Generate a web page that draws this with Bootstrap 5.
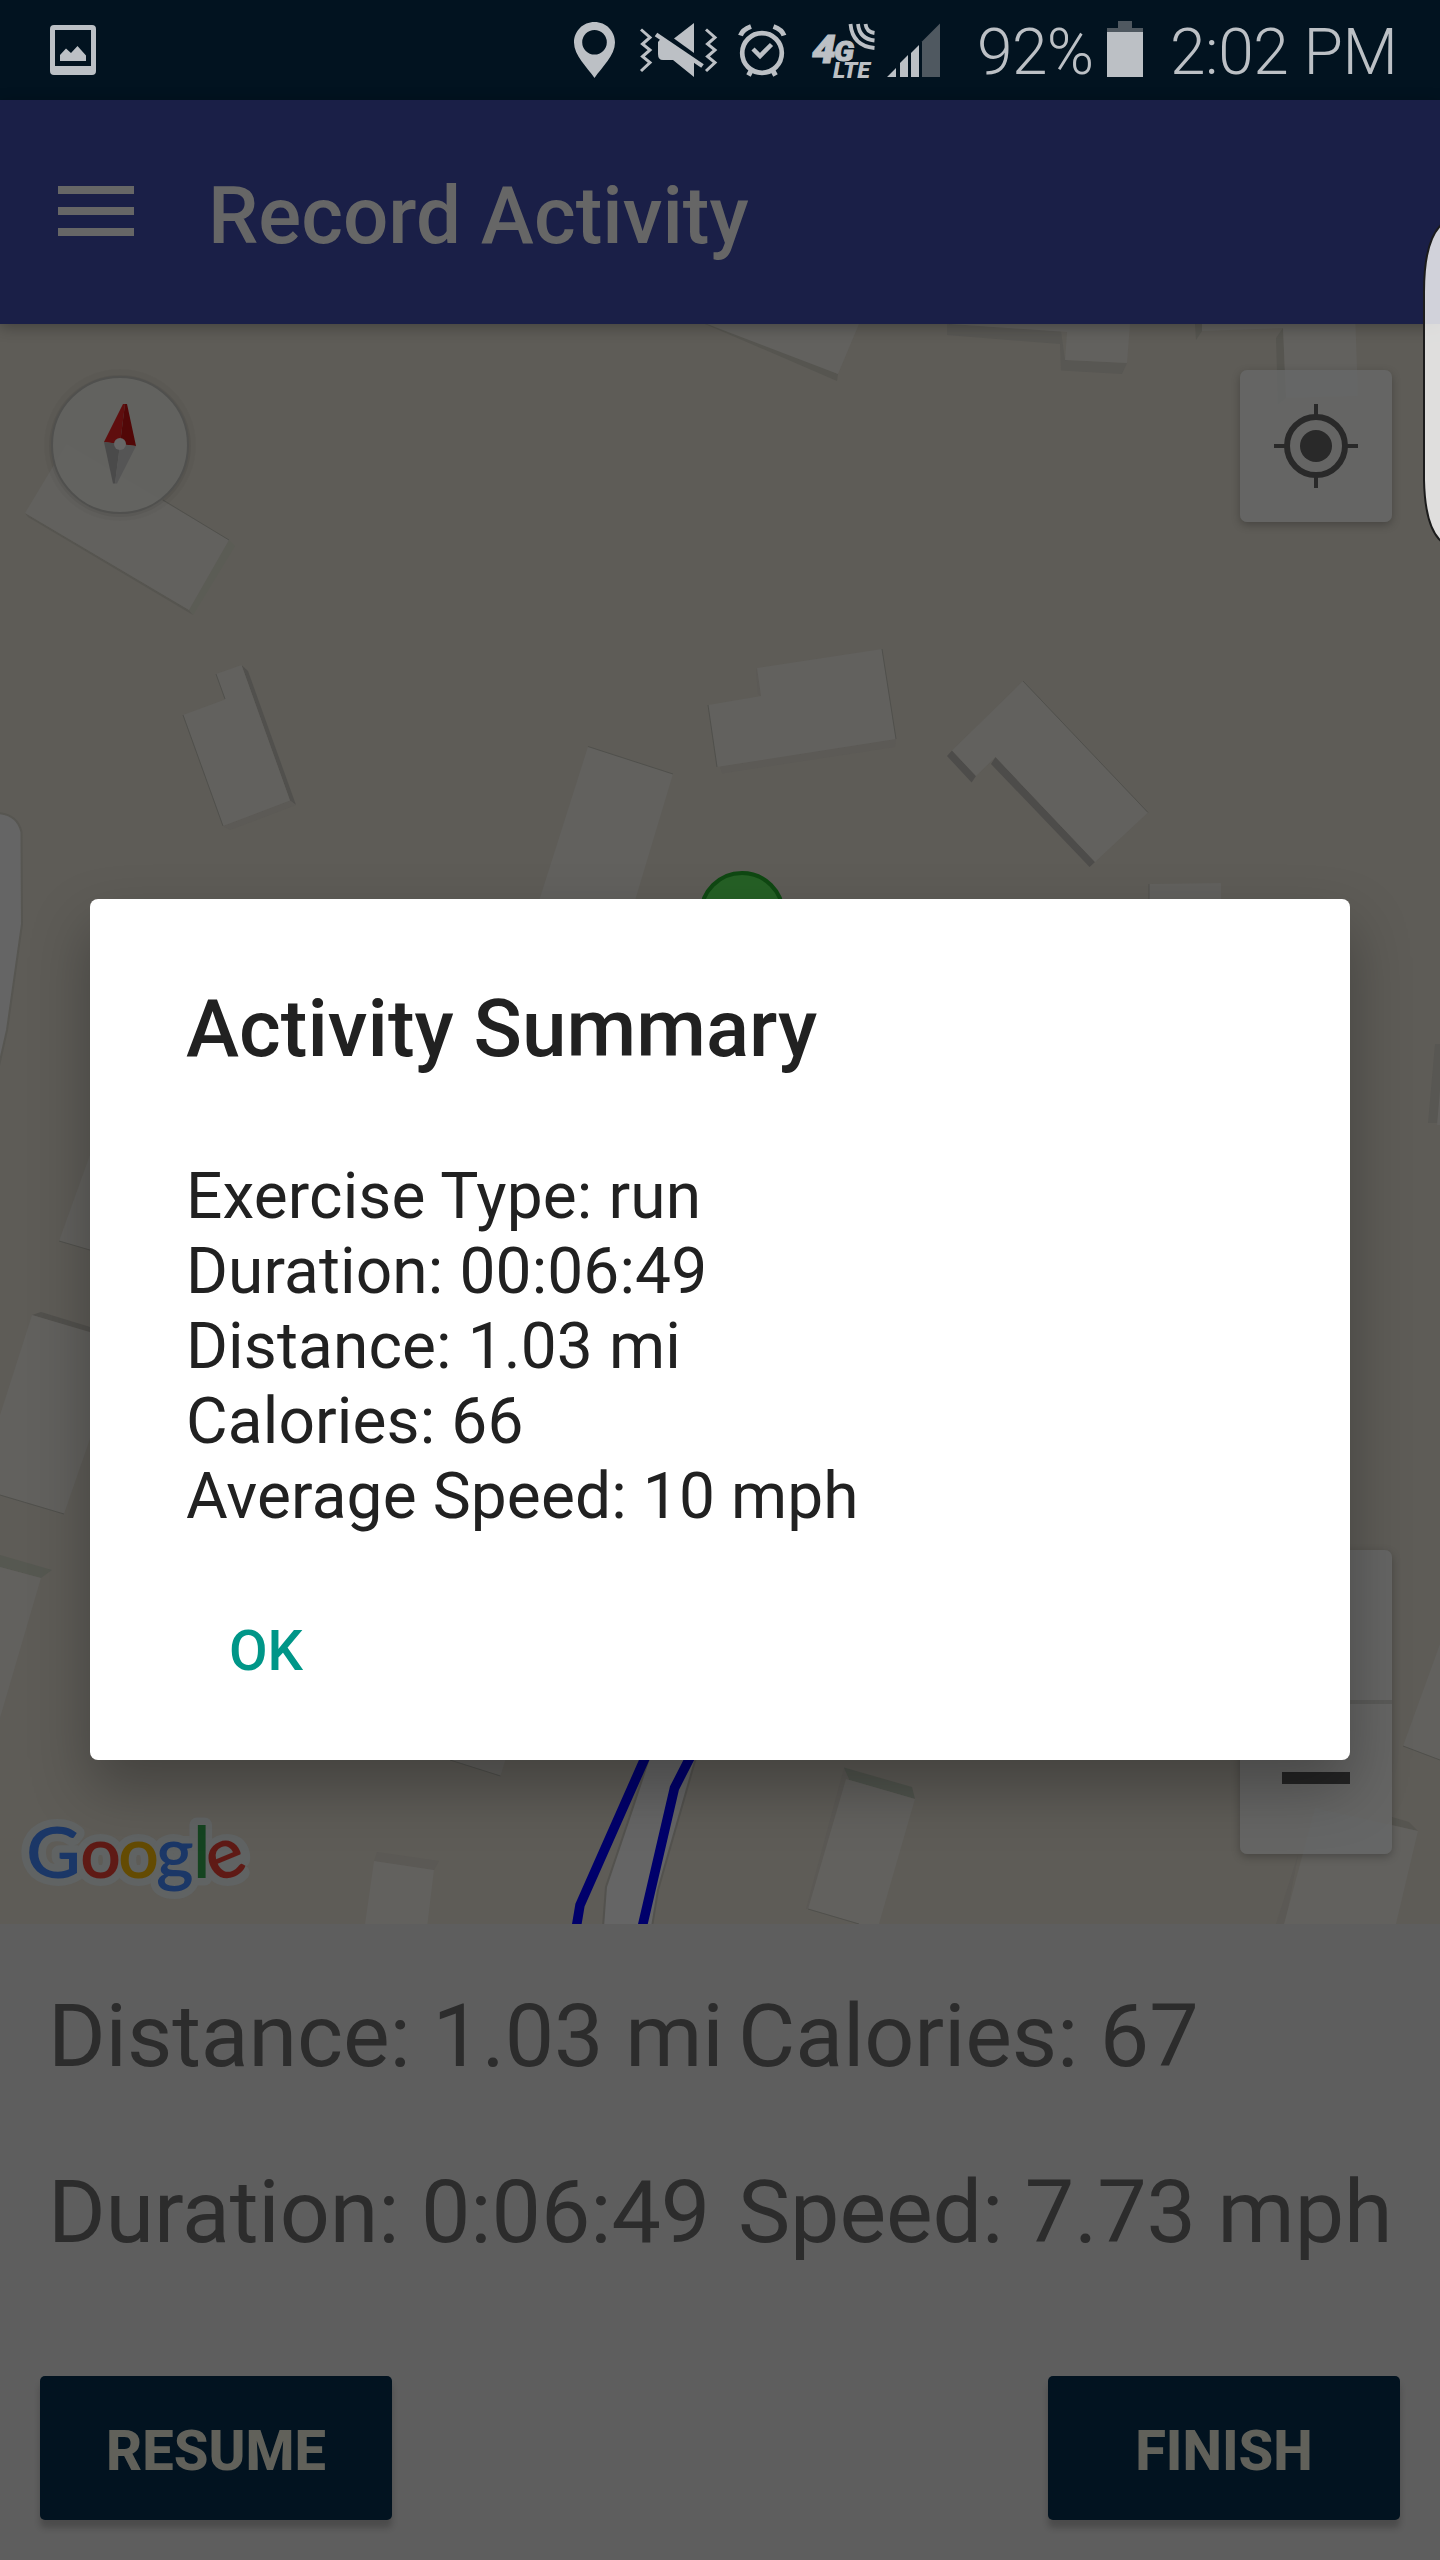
<!DOCTYPE html>
<html lang="en">
<head>
<meta charset="utf-8">
<meta name="viewport" content="width=device-width, initial-scale=1">
<title>Record Activity</title>
<link href="https://cdn.jsdelivr.net/npm/bootstrap@5.3.0/dist/css/bootstrap.min.css" rel="stylesheet">
<style>
  body { font-family: Roboto, "Liberation Sans", sans-serif; background: #5e5e5e; width: 1440px; height: 2560px; overflow: hidden; }
  svg { display: block; flex: none; }
  .status { height: 100px; background: #021320; color: #bcc0c5; font-size: 64px; line-height: 100px; font-weight: 350; padding-left: 50px; white-space: nowrap; }
  .status-pct { width: 155px; padding-left: 32px; padding-top: 5px; letter-spacing: -.6px; }
  .status-time { width: 290px; padding-left: 20px; padding-top: 5px; letter-spacing: -.4px; }
  .appbar { height: 224px; background: #1a1f47; padding: 0 58px; box-shadow: 0 3px 14px rgba(0,0,0,.3); z-index: 2; }
  .appbar-title { font-size: 80px; line-height: 94px; font-weight: 500; color: #666; margin-left: 74px; padding-top: 7px; }
  .burger { gap: 13px; width: 76px; padding-bottom: 2px; }
  .burger span { height: 8px; background: #666; }
  .map-area { height: 1600px; background: #5e5c57; }
  .map-btn { width: 152px; right: 48px; background: rgba(103,104,104,.8); border-radius: 7px; box-shadow: 0 3px 8px rgba(0,0,0,.25); }
  .locate { top: 46px; height: 152px; }
  .zoomer { top: 1226px; height: 304px; }
  .zoomer .zoom-part { height: 150px; }
  .zoomer .zoom-line { height: 4px; background: #5a5a58; }
  .zoomer svg { margin-bottom: 2px; }
  .stats { height: 452px; color: #2c2c2c; font-size: 88px; line-height: 104px; padding: 60px 0 0 48px; white-space: nowrap; letter-spacing: -.13px; }
  .stats .stat-row { height: 176px; }
  .stats .stat-left { width: 690px; }
  .actions { padding: 0 40px; }
  .btn-act { width: 352px; height: 144px; background: #021320; color: #61615a; font-size: 56px; font-weight: 800; line-height: 66px; border: 0; border-radius: 5px; box-shadow: 0 8px 6px rgba(0,0,0,.2); padding: 5px 0 0; }
  .dialog-layer { top: 899px; left: 90px; width: 1260px; z-index: 5; }
  .dialog-box { height: 861px; border: 0; border-radius: 8px; background: #fff; color: #212121; padding: 83px 96px 0; box-shadow: 0 28px 60px rgba(0,0,0,.29); }
  .dialog-box h1 { font-size: 80px; line-height: 94px; font-weight: 500; margin: 0 0 83px; }
  .dialog-box p { font-size: 64px; line-height: 75px; margin: 0; letter-spacing: .12px; }
  .btn-ok { font-size: 56px; line-height: 66px; font-weight: 550; color: #009688; padding: 0; margin: 84px 0 0 43px; border: 0; }
  .edge-panel { right: 0; top: 220px; z-index: 6; }
</style>
</head>
<body class="position-relative d-flex flex-column">

<header class="status d-flex align-items-center">
  <svg width="46" height="100" viewBox="50 0 46 100" fill="#bcc0c5"><path fill-rule="evenodd" d="M54 25h38a4 4 0 0 1 4 4v42a4 4 0 0 1-4 4H54a4 4 0 0 1-4-4V29a4 4 0 0 1 4-4zM55 30v36h36V30z"/><path d="M60 61v-6l6-6.500 5 4.500 6.500-7L86 55.500V61z"/></svg>
  <div class="d-flex align-items-center ms-auto">
    <svg width="60" height="100" viewBox="570 0 60 100" fill="#bcc0c5"><path fill-rule="evenodd" d="M594.500 22c-11.500 0-20.500 9-20.500 20.500 0 13 13 24.500 20.500 35.500 7.500-11 20.500-22.500 20.500-35.500 0-11.500-9-20.500-20.500-20.500zm0 8a12.300 12.300 0 1 1 0 24.600 12.300 12.300 0 0 1 0-24.600z"/></svg>
    <svg width="95" height="100" viewBox="630 0 95 100" fill="#bcc0c5"><path d="M674 38.500 694 23v30z"/><path d="M661 38.500 694 61v16l-21-17h-10q-5 0-5-6V42z"/><path d="m656 34.500 46.500 31.500" stroke="#bcc0c5" stroke-width="4.500"/><g fill="none" stroke="#bcc0c5" stroke-width="3"><path d="m641 29.500 9 8-7.500 6.500 7.500 6-7.500 6.500 7.500 6-9 8.500"/><path d="m706 29.500 9 8-7.500 6.500 7.500 6-7.500 6.500 7.500 6-9 8.500"/></g></svg>
    <svg width="75" height="100" viewBox="725 0 75 100" fill="none" stroke="#bcc0c5"><circle cx="762" cy="53" r="19.800" stroke-width="4.700"/><path d="m753 49 7 7 11.500-11.500" stroke-width="4.500"/><path d="M740.500 35.500q2-6 10.500-9M784 35.500q-2-6-10.500-9" stroke-width="5"/><path d="m751.500 70-3 5.500M772.500 70l3 5.500" stroke-width="5"/></svg>
    <svg width="80" height="100" viewBox="800 0 80 100" fill="#bcc0c5" font-family="Roboto, sans-serif" font-weight="900" font-style="italic"><text x="812" y="63" font-size="39" stroke="#bcc0c5" textLength="24" lengthAdjust="spacingAndGlyphs">4</text><text x="834" y="60.500" font-size="28" stroke="#bcc0c5" textLength="20" lengthAdjust="spacingAndGlyphs">G</text><text x="833" y="78" font-size="22" textLength="37" lengthAdjust="spacingAndGlyphs">LTE</text><g fill="none" stroke="#bcc0c5" stroke-width="3.800"><path d="M850.500 24q2 22 24 24M858 24q1.500 15 16.500 16.500M865.500 24q1 8 9 9"/></g></svg>
    <svg width="65" height="100" viewBox="880 0 65 100" fill="#bcc0c5"><path d="m887 77 9-9v9zM900 77V63l8-8v22zM911 77V53l8-8v32z"/><path fill="#4f5860" d="M922 77V41.500l18-18V77z"/></svg>
    <div class="status-pct">92%</div>
    <svg width="50" height="100" viewBox="1100 0 50 100"><path fill="#4f5860" d="M1118 21h14v7h11v4h-36v-4h11z"/><path fill="#bcc0c5" d="M1107 32h36v45h-36z"/></svg>
    <div class="status-time">2:02 PM</div>
  </div>
</header>

<nav class="appbar position-relative d-flex align-items-center">
  <div class="burger d-flex flex-column"><span></span><span></span><span></span></div>
  <div class="appbar-title">Record Activity</div>
</nav>

<main class="map-area position-relative">
  <svg width="1440" height="1600" viewBox="0 324 1440 1600">
    <!-- walls of buildings -->
    <g fill="#565550">
      <path d="M25 513 189 610l4 5L28 517z"/><path fill="#5b5c55" d="m229 540 6 6-42 69-4-5z"/>
      <path fill="#51504d" d="m241.500 665 6.500 6 48 134-6-4.500z"/><path fill="#5c5a56" d="m223 826 7 4 66-25-6-4.500z"/>
      <path d="M705 324h15l118 50-1 7z"/><path fill="#585753" d="M949 324h-2v11l113 9 1 26.500 61 3.500 5-11-62-3-4-29z"/>
      <path d="M1195 324h7v7l-6 9zM1283 328l-7 10 2 66 8-6z"/>
      <path fill="#5c5a56" d="m896 739-176 27.500 2 7L895 747zM757 668l4 28-3-2-2-24z"/>
      <path fill="#4d4c4a" d="m952 750.500-5 5.500 24.600 26.600L976 776zM995.500 757l-4.500 7 98.600 103 5.400-5z"/>
      <path fill="#52514d" d="m32 1315 9-3 59 18v6z"/><path fill="#565851" d="M0 1555l52 15-11 8-41-11z"/>
      <path fill="#585753" d="M1435 1044h5v79h-12z"/><path d="m1392 1817 17 5 9 9-26-6z"/>
      <path fill="#50544d" d="m844 1767.500 68 19.500 3 12-69-20z"/><path fill="#5b5955" d="m844 1768-38 141h3l40-130zM377 1852l62 9-5 9-60-9zM1298 1855l-22 69h9z"/>
    </g>
    <!-- roofs -->
    <g fill="#62615e">
      <path d="m25 513 41.500-69L229 540l-40 70z"/>
      <path d="m183 715 42-15.500-9-25.500 25.500-9L290 800.500 223 826z"/>
      <path d="m588 746.500 85 27.500-39 130h-96z"/>
      <path d="M707 324h152l-21 50z"/>
      <path d="m949.600 324 117.400 8-2 28 62 3 3-39z"/>
      <path d="M1202 324v7l81-3 3 70 72-2-2.500-72z"/>
      <path d="m708 705 53-9-4-28 125-19 14 90-179 28z"/>
      <path d="m1023 681 125 131.500-53 49.500-99.500-105-19.500 19-24-25.500z"/>
      <path d="m1149 884 72-1v30h-72z"/>
      <path d="m100 1127-41 114 41 12z"/>
      <path d="m32 1315 68 20v75l-36 104-64-19v-80z"/>
      <path d="m0 1567 41 11-41 140z"/>
      <path d="M1440 1090v35h-3zM1440 1644l-37 102 37 14z"/>
      <path d="m1315 1808 103 23-22 93h-112z"/>
      <path d="m846 1779 69 20-36 125h-20l-51-15z"/>
      <path d="m450 1760 50.500 16 6-20zM374 1861l60 9-6.500 54H365z"/>
    </g>
    <g fill="none" stroke="#50504c" stroke-width="1"><path d="m163 500 66 40M183 715l40 111M216 674l9 25M588 746.500l85 27.500M708 705l9 62M882 649l14 90M1023 681l125 131.500M59 1241l41 12M0 1495l64 19M1403 1746l37 14M808 1909l51 15M1149 884v20M450 1760l50.500 16"/></g>
    <!-- roads -->
    <path d="M-5 813q22 0 26.500 19l.5 92-15 106-9 40z" fill="#656565" stroke="#575651" stroke-width="2"/>
    <path d="m655 1740-22 67-27 80-3 40h49l6-37 43-150z" fill="#656565" stroke="#53524e" stroke-width="2"/>
    <!-- recorded track -->
    <g fill="none" stroke="#00006b" stroke-width="9.500"><path d="m653 1740-73 165-4 24M699 1740l-24.500 48-33 142"/></g>
    <circle cx="742" cy="914" r="41" fill="#256025" stroke="#0f4812" stroke-width="4"/>
    <!-- compass -->
    <circle cx="120" cy="445" r="76" fill="#000" opacity=".025"/><circle cx="120" cy="446" r="71" fill="#000" opacity=".05"/>
    <circle cx="120" cy="445" r="68" fill="#646462" fill-opacity=".88" stroke="#50504e" stroke-width="2"/>
    <path fill="#5f0e0e" d="m123 404-19 38 16 2 5-40z"/><path fill="#520707" d="M125 404h2l9 42-16-2z"/>
    <path fill="#4a4a4a" d="m104 442 16 2-5 39.500h-2z"/><path fill="#555" d="m136 446-16-2-5 39.500h2z"/><circle cx="120" cy="444" r="6" fill="#666"/>
    <!-- attribution logo -->
    <g font-family="Lato, sans-serif" font-size="72" font-weight="600">
      <g fill="#606363" stroke="#606363" stroke-width="15" stroke-linejoin="round"><text x="26" y="1878" textLength="55" lengthAdjust="spacingAndGlyphs">G</text><text x="80" y="1878">o</text><text x="118" y="1878">o</text><text x="156" y="1878">g</text><text x="192" y="1878">l</text><text x="207" y="1878">e</text></g>
      <text x="26" y="1878" fill="#1b3767" textLength="55" lengthAdjust="spacingAndGlyphs">G</text><text x="80" y="1878" fill="#5f1a15">o</text><text x="118" y="1878" fill="#644b02">o</text><text x="156" y="1878" fill="#1b3767">g</text><text x="193" y="1878" fill="#154420">l</text><text x="207" y="1878" fill="#5f1a15" transform="rotate(-22 226 1861)">e</text>
    </g>
  </svg>
  <div class="map-btn locate position-absolute d-flex align-items-center justify-content-center">
    <svg width="84" height="84" viewBox="-42 -42 84 84" fill="none" stroke="#292929"><circle r="29" stroke-width="6"/><path d="M0-42v11M0 31v11M-42 0h11M31 0h11" stroke-width="4"/><circle r="16" fill="#292929" stroke="none"/></svg>
  </div>
  <div class="map-btn zoomer position-absolute d-flex flex-column">
    <div class="zoom-part"></div>
    <div class="zoom-line"></div>
    <div class="zoom-part d-flex align-items-center justify-content-center"><svg width="68" height="12"><path d="M0 0h68v12H0z" fill="#242424"/></svg></div>
  </div>
</main>

<section class="stats">
  <div class="stat-row d-flex"><div class="stat-left">Distance: 1.03 mi</div><div>Calories: 67</div></div>
  <div class="stat-row d-flex"><div class="stat-left">Duration: 0:06:49</div><div>Speed: 7.73 mph</div></div>
</section>
<footer class="actions d-flex justify-content-between">
  <button class="btn btn-act">RESUME</button>
  <button class="btn btn-act">FINISH</button>
</footer>

<div class="dialog-layer position-absolute">
  <div class="modal-content dialog-box align-items-start">
    <h1>Activity Summary</h1>
    <p>Exercise Type: run<br>Duration: 00:06:49<br>Distance: 1.03 mi<br>Calories: 66<br>Average Speed: 10 mph</p>
    <button class="btn btn-ok">OK</button>
  </div>
</div>

<svg class="edge-panel position-absolute" width="20" height="326" viewBox="1420 220 20 326"><path d="M1442 224q-18 16-18 68v188q1 48 18 62z" fill="#fff" fill-opacity=".8" stroke="#1c1c1c" stroke-width="2"/></svg>

<script src="https://cdn.jsdelivr.net/npm/bootstrap@5.3.0/dist/js/bootstrap.bundle.min.js"></script>
</body>
</html>
